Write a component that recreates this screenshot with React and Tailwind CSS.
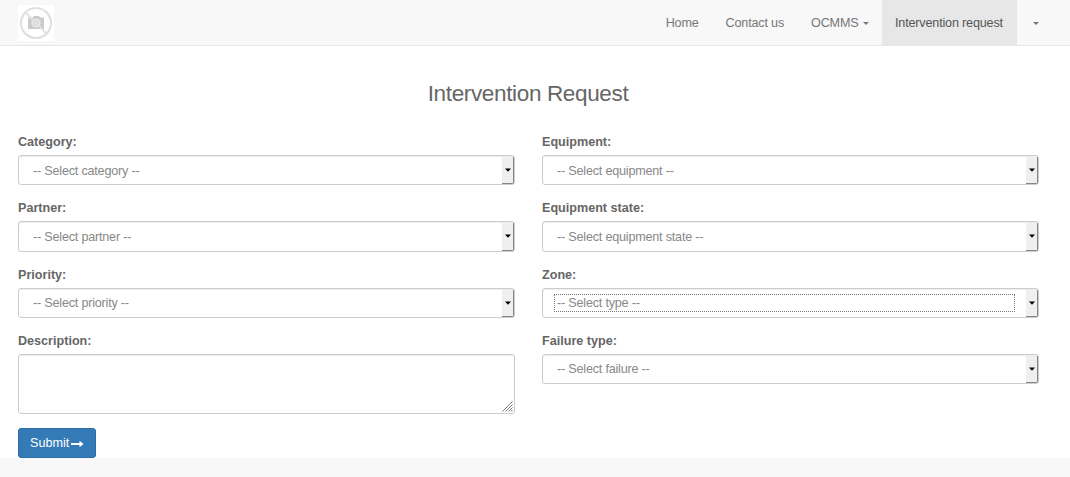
const leftFields = [
  { label: "Category:", value: "-- Select category --" },
  { label: "Partner:", value: "-- Select partner --" },
  { label: "Priority:", value: "-- Select priority --" },
];

const rightFields = [
  { label: "Equipment:", value: "-- Select equipment --" },
  { label: "Equipment state:", value: "-- Select equipment state --" },
  { label: "Zone:", value: "-- Select type --", focused: true },
  { label: "Failure type:", value: "-- Select failure --" },
];

function Caret() {
  return (
    <span className="ml-[4px] inline-block h-0 w-0 border-x-[3px] border-t-[3px] border-x-transparent border-t-current align-middle" />
  );
}

function Label({ children }) {
  return (
    <div className="mb-[4px] h-[18px] font-bold leading-[18px] text-[#666]">
      {children}
    </div>
  );
}

function SelectField({ label, value, focused }) {
  return (
    <div className="h-[66.27px]">
      <Label>{label}</Label>
      <button
        type="button"
        className="flex h-[30.3px] w-full items-stretch overflow-hidden rounded-[3px] border border-[#ccc] bg-white text-left text-[#888] shadow-[inset_0_1px_1px_rgba(0,0,0,0.075)]"
      >
        <span
          className={
            "my-[5px] ml-[11px] mr-[11px] flex flex-1 items-center border border-dotted pl-[2px] pt-[1.7px] leading-none tracking-[-0.2px] " +
            (focused ? "border-[#777]" : "border-transparent")
          }
        >
          {value}
        </span>
        <span className="mt-px flex w-[12px] items-center justify-center border-b border-r border-b-[#858585] border-r-[#858585] bg-[#f0efed]">
          <svg width="6" height="4" viewBox="0 0 6 4" className="block">
            <path d="M0 0.5H6L3 3.8Z" fill="#000" />
          </svg>
        </span>
      </button>
    </div>
  );
}

function Logo() {
  return (
    <svg width="36" height="36" viewBox="0 0 36 36" className="block bg-white">
      <path d="M10 12.5h5l1-1.5h5l1 1.5h4V24H10z" fill="#cbcbcb" />
      <circle cx="18" cy="18" r="4.6" fill="#e9e9e9" />
      <circle cx="18" cy="18" r="3.2" fill="#dcdcdc" />
      <path d="M7.5 7.5L28.5 28.5" stroke="#e2e2e2" strokeWidth="2" />
      <circle cx="18" cy="18" r="15" fill="none" stroke="#e0e0e0" strokeWidth="2.2" />
    </svg>
  );
}

export default function App() {
  return (
    <div className="h-[477px] overflow-hidden bg-[#f8f8f8] font-['Liberation_Sans',Arial,sans-serif] text-[12.6px] text-[#777]">
      <header className="flex h-[46px] items-start justify-between border-b border-[#e7e7e7] bg-[#f8f8f8] pl-[18px] pr-[18px]">
        <div className="pt-[5px]">
          <Logo />
        </div>
        <nav className="flex h-[45px] leading-[46px] tracking-[-0.17px]">
          <a className="px-[13.5px]">Home</a>
          <a className="px-[13.5px]">Contact us</a>
          <a className="px-[13.5px]">
            OCMMS
            <Caret />
          </a>
          <a className="h-[45px] w-[135px] bg-[#e7e7e7] px-[13px] text-[#555]">
            Intervention request
          </a>
          <a className="pl-[12px] pr-[13px]">
            <Caret />
          </a>
        </nav>
      </header>
      <main className="h-[412px] bg-white px-[18px] pt-[34px]">
        <h1 className="mb-[25px] h-[28px] w-[1020px] text-center text-[22.5px] leading-[28px] tracking-[-0.35px] text-[#666]">
          Intervention Request
        </h1>
        <div className="flex gap-[27px]">
          <div className="w-[497px]">
            {leftFields.map((f) => (
              <SelectField key={f.label} {...f} />
            ))}
            <Label>Description:</Label>
            <div className="flex h-[60px] items-end justify-end rounded-[3px] border border-[#ccc] p-px shadow-[inset_0_1px_1px_rgba(0,0,0,0.075)]">
              <svg width="11" height="11" viewBox="0 0 11 11" className="block">
                <path
                  d="M0.5 10.5L10.5 0.5M3.5 10.5L10.5 3.5M6.5 10.5L10.5 6.5M9 10.5L10.5 9"
                  stroke="#777"
                  strokeWidth="1"
                />
              </svg>
            </div>
            <button
              type="button"
              className="mt-[14px] flex h-[30px] w-[78px] items-center rounded-[3px] border border-[#2e6da4] bg-[#337ab7] pl-[11px] pt-[2px] text-white"
            >
              Submit
              <svg width="13" height="8" viewBox="0 0 13 8" className="ml-[2px] block">
                <path d="M0 3H8.5V0.7L12.6 4L8.5 7.3V5H0Z" fill="#fff" />
              </svg>
            </button>
          </div>
          <div className="w-[497px]">
            {rightFields.map((f) => (
              <SelectField key={f.label} {...f} />
            ))}
          </div>
        </div>
      </main>
    </div>
  );
}
